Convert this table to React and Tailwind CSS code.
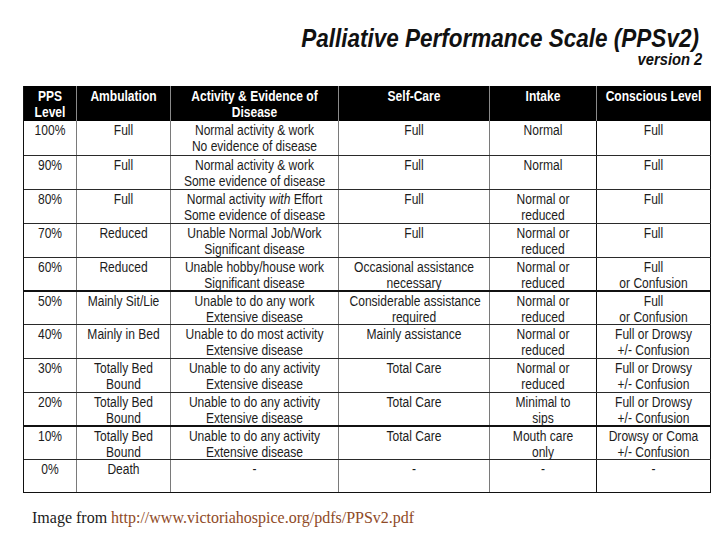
import React from "react";

const cols = ["w-[53px]", "w-[94px]", "w-[168px]", "w-[151px]", "w-[107px]", "w-[114px]"];
const vborder = [
  "border-r border-r-[#7a7a7a]",
  "border-r border-r-[#7a7a7a]",
  "border-r border-r-[#7a7a7a]",
  "border-r border-r-[#7a7a7a]",
  "border-r border-r-[#111]",
  "border-r border-r-[#111]",
];

const rows = [
  ["100%", "Full", ["Normal activity & work", "No evidence of disease"], "Full", "Normal", "Full"],
  ["90%", "Full", ["Normal activity & work", "Some evidence of disease"], "Full", "Normal", "Full"],
  [
    "80%",
    "Full",
    [
      <>
        Normal activity <i>with</i> Effort
      </>,
      "Some evidence of disease",
    ],
    "Full",
    ["Normal or", "reduced"],
    "Full",
  ],
  ["70%", "Reduced", ["Unable Normal Job/Work", "Significant disease"], "Full", ["Normal or", "reduced"], "Full"],
  [
    "60%",
    "Reduced",
    ["Unable hobby/house work", "Significant disease"],
    ["Occasional assistance", "necessary"],
    ["Normal or", "reduced"],
    ["Full", "or Confusion"],
  ],
  [
    "50%",
    "Mainly Sit/Lie",
    ["Unable to do any work", "Extensive disease"],
    ["Considerable assistance", "required"],
    ["Normal or", "reduced"],
    ["Full", "or Confusion"],
  ],
  [
    "40%",
    "Mainly in Bed",
    ["Unable to do most activity", "Extensive disease"],
    "Mainly assistance",
    ["Normal or", "reduced"],
    ["Full or Drowsy", "+/- Confusion"],
  ],
  [
    "30%",
    ["Totally Bed", "Bound"],
    ["Unable to do any activity", "Extensive disease"],
    "Total Care",
    ["Normal or", "reduced"],
    ["Full or Drowsy", "+/- Confusion"],
  ],
  [
    "20%",
    ["Totally Bed", "Bound"],
    ["Unable to do any activity", "Extensive disease"],
    "Total Care",
    ["Minimal to", "sips"],
    ["Full or Drowsy", "+/- Confusion"],
  ],
  [
    "10%",
    ["Totally Bed", "Bound"],
    ["Unable to do any activity", "Extensive disease"],
    "Total Care",
    ["Mouth care", "only"],
    ["Drowsy or Coma", "+/- Confusion"],
  ],
  ["0%", "Death", "-", "-", "-", "-"],
];

const rowH = ["h-[34px]", "h-[34px]", "h-[34px]", "h-[34px]", "h-[33px]", "h-[34px]", "h-[34px]", "h-[34px]", "h-[33px]", "h-[34px]", "h-[33px]"];

const headers = [
  ["PPS", "Level"],
  ["Ambulation"],
  ["Activity & Evidence of", "Disease"],
  ["Self-Care"],
  ["Intake"],
  ["Conscious Level"],
];

function Lines({ value }) {
  const lines = Array.isArray(value) ? value : [value];
  return (
    <>
      {lines.map((l, i) => (
        <div key={i} className="scale-x-[0.86] origin-center whitespace-nowrap">
          {l}
        </div>
      ))}
    </>
  );
}

export default function App() {
  return (
    <div className="w-[728px] h-[546px] bg-white overflow-hidden font-['Liberation_Sans',Arial,sans-serif]">
      <div className="pt-[26px] pr-[29px] text-right">
        <div className="text-[25px] leading-[24px] font-bold italic text-[#111]">
          <span className="inline-block origin-right scale-x-[0.9]">Palliative Performance Scale (PPSv2)</span>
        </div>
        <div className="mt-[2px] text-[16px] leading-[16px] font-bold italic text-[#111]">
          <span className="inline-block origin-right scale-x-[0.92] mr-[-3px]">version 2</span>
        </div>
      </div>

      <div className="ml-[23px] mt-[18px] w-[688px] border-l border-l-[#111] border-b border-b-[#111]">
        <div className="flex h-[35px] bg-black text-white font-bold text-[14px] leading-[16px]">
          {headers.map((h, i) => (
            <div
              key={i}
              className={`${cols[i]} shrink-0 text-center pt-[2px] ${i < 5 ? "border-r border-r-[#8a8a8a]" : "border-r border-r-black"}`}
            >
              <Lines value={h} />
            </div>
          ))}
        </div>
        {rows.map((r, ri) => (
          <div
            key={ri}
            className={`flex ${rowH[ri]} text-[14px] leading-[16px] text-[#1c1c1c] ${ri > 0 ? (ri === 5 || ri === 9 ? "border-t-2 border-t-[#111]" : "border-t border-t-[#2a2a2a]") : ""}`}
          >
            {r.map((c, ci) => (
              <div key={ci} className={`${cols[ci]} shrink-0 text-center pt-[1px] ${vborder[ci]}`}>
                <Lines value={c} />
              </div>
            ))}
          </div>
        ))}
      </div>

      <div className="mt-[16px] ml-[32px] font-['Liberation_Serif','Times_New_Roman',serif] text-[16px] leading-[18px] text-[#1a1a1a]">
        Image from <span className="text-[#8f4a26]">http://www.victoriahospice.org/pdfs/PPSv2.pdf</span>
      </div>
    </div>
  );
}
